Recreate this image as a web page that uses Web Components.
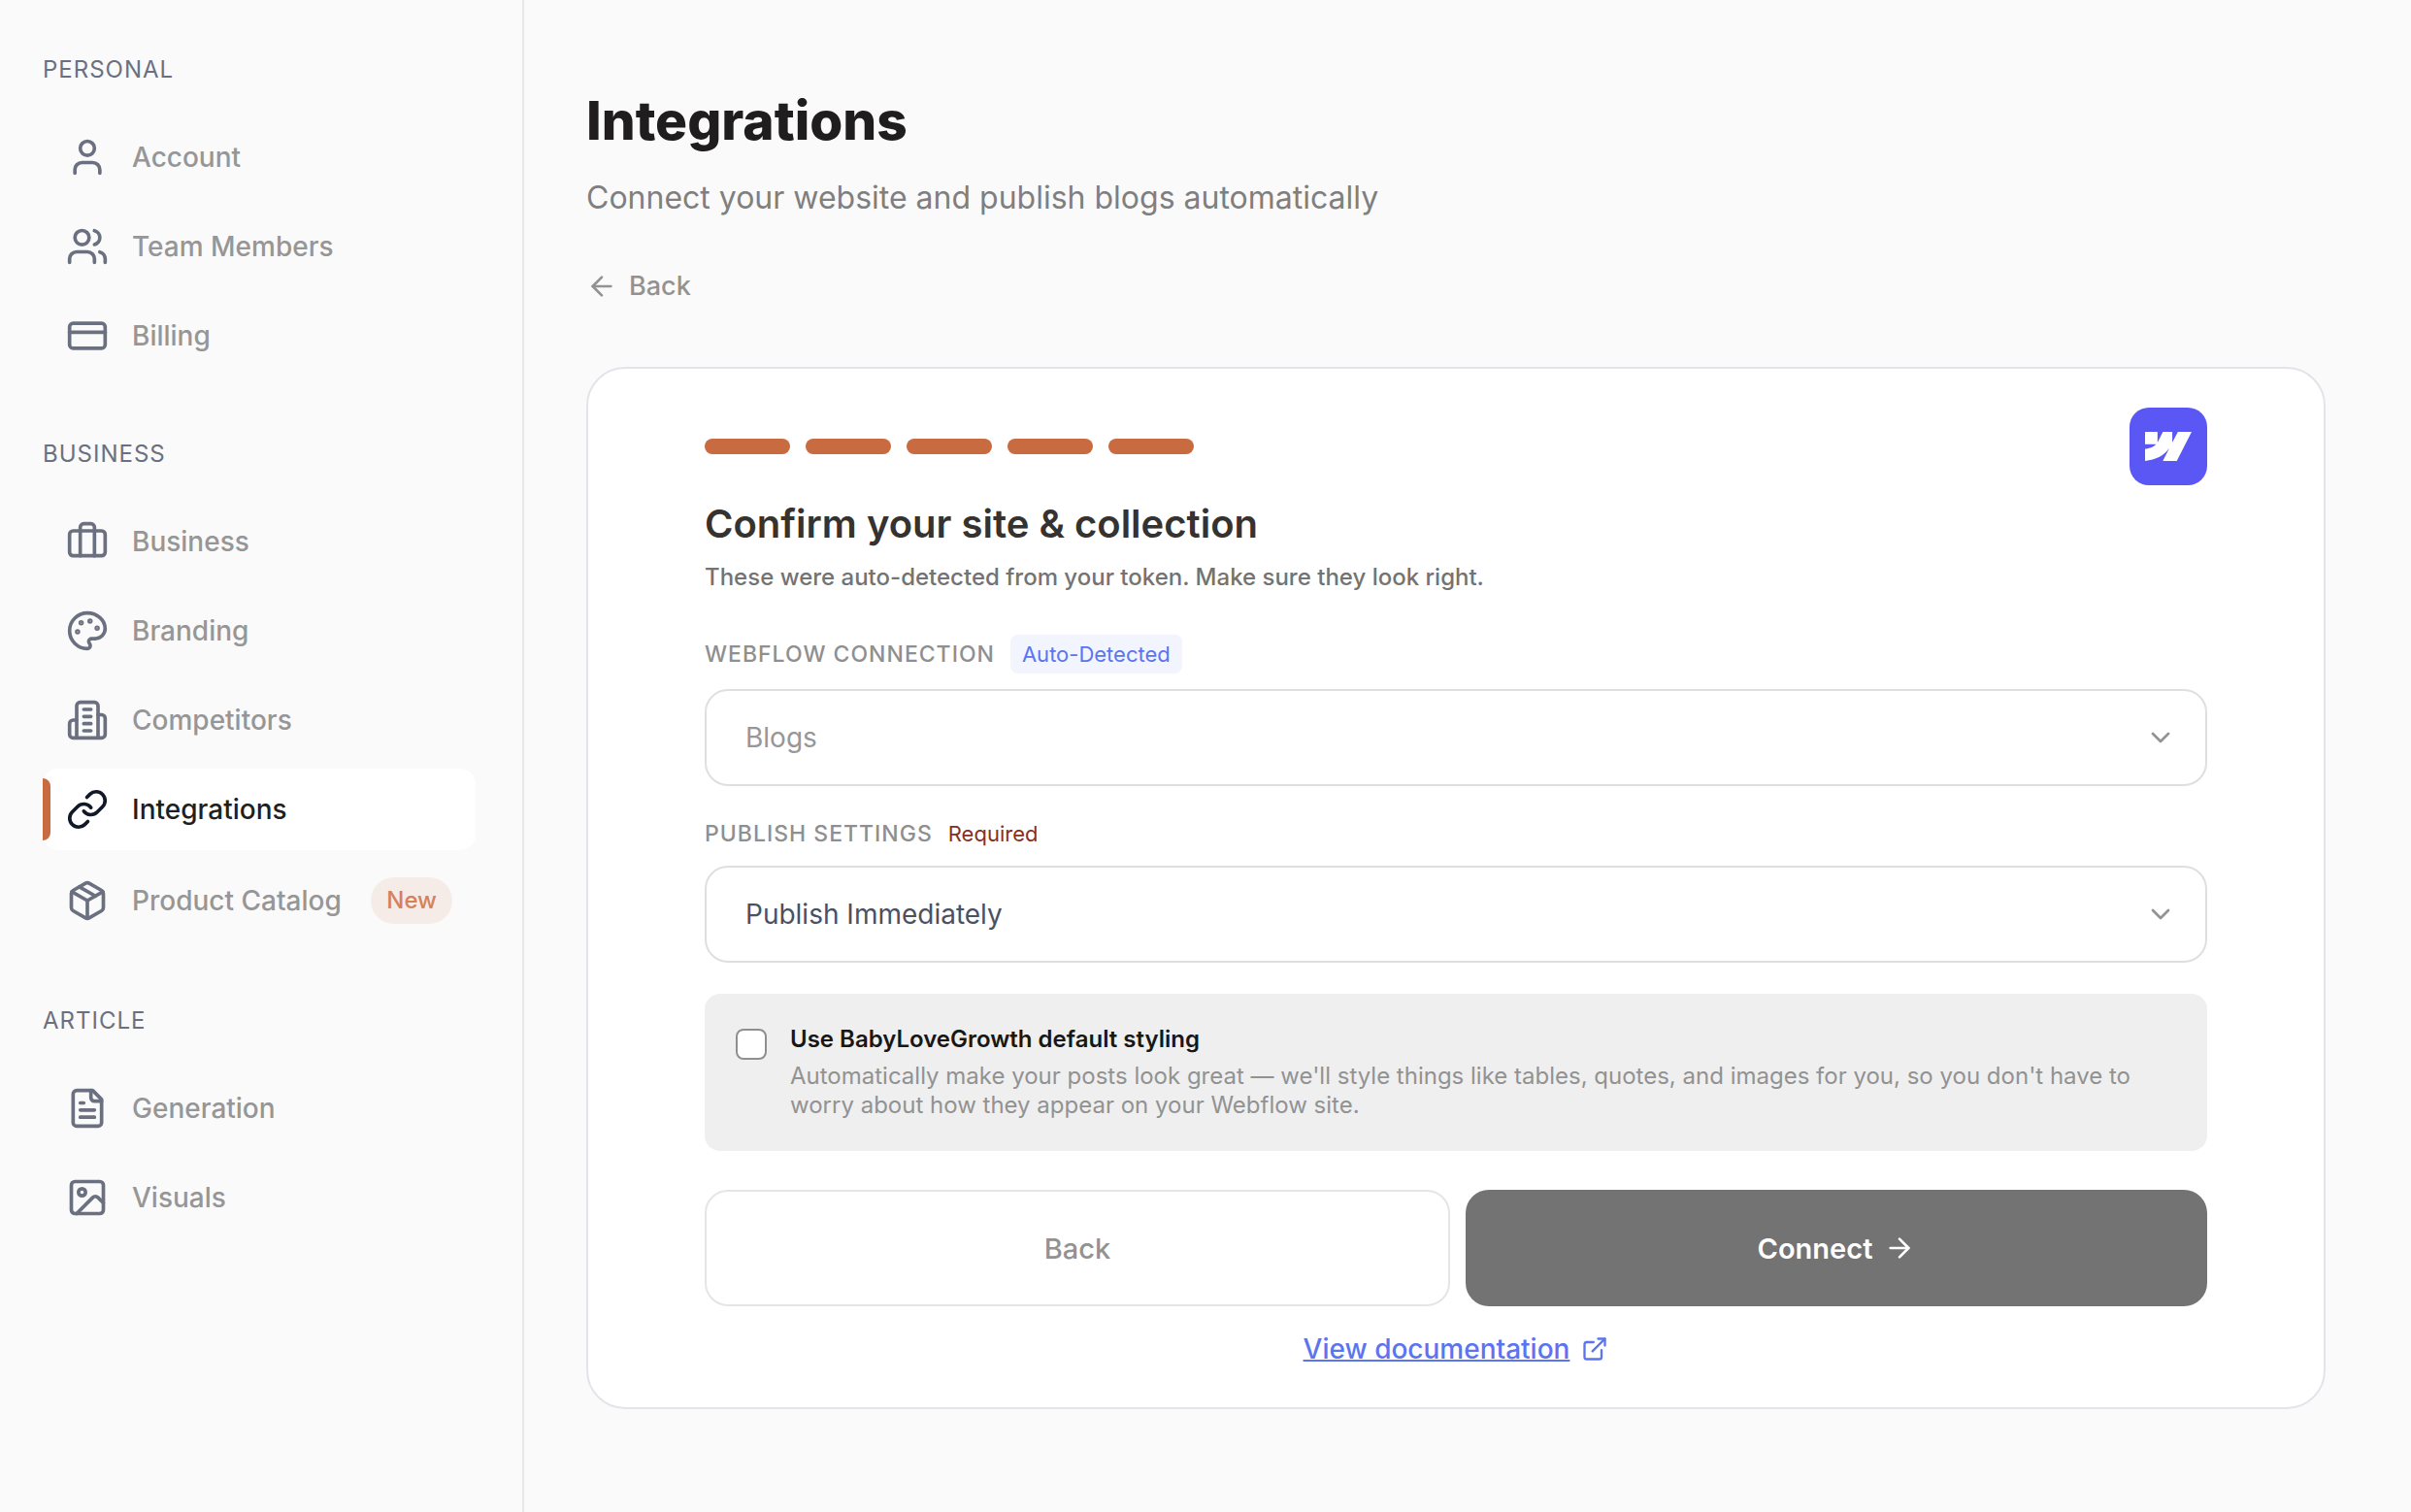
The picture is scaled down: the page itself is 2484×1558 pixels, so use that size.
<!DOCTYPE html>
<html lang="en">
<head>
<meta charset="UTF-8">
<meta name="viewport" content="width=device-width, initial-scale=1.0">
<title>Integrations</title>
<style>
  body {
    margin: 0;
    background: #fafafa;
    color: #1f1f1f;
    font-family: Inter, "Liberation Sans", sans-serif;
  }
</style>
</head>
<body>
<app-shell>
  <app-sidebar slot="sidebar">
    <nav-section heading="Personal">
      <nav-item icon="user">Account</nav-item>
      <nav-item icon="users">Team Members</nav-item>
      <nav-item icon="card">Billing</nav-item>
    </nav-section>
    <nav-section heading="Business">
      <nav-item icon="briefcase">Business</nav-item>
      <nav-item icon="palette">Branding</nav-item>
      <nav-item icon="building">Competitors</nav-item>
      <nav-item icon="link" active>Integrations</nav-item>
      <nav-item icon="package" badge="New">Product Catalog</nav-item>
    </nav-section>
    <nav-section heading="Article">
      <nav-item icon="file">Generation</nav-item>
      <nav-item icon="image">Visuals</nav-item>
    </nav-section>
  </app-sidebar>

  <page-header>
    Integrations
    <span slot="subtitle">Connect your website and publish blogs automatically</span>
  </page-header>

  <setup-card steps="5">
    <span slot="title">Confirm your site &amp; collection</span>
    <span slot="description">These were auto-detected from your token. Make sure they look right.</span>
    <select-field label="Webflow connection" tag="Auto-Detected" value="Blogs" muted></select-field>
    <select-field label="Publish settings" note="Required" value="Publish Immediately"></select-field>
    <check-option>
      Use BabyLoveGrowth default styling
      <span slot="hint">Automatically make your posts look great — we'll style things like tables, quotes, and images for you, so you don't have to worry about how they appear on your Webflow site.</span>
    </check-option>
    <form-actions></form-actions>
    <doc-link>View documentation</doc-link>
  </setup-card>
</app-shell>

<script>
const ICONS = {
  user: '<path d="M19 21v-2a4 4 0 0 0-4-4H9a4 4 0 0 0-4 4v2"/><circle cx="12" cy="7" r="4"/>',
  users: '<path d="M16 21v-2a4 4 0 0 0-4-4H6a4 4 0 0 0-4 4v2"/><circle cx="9" cy="7" r="4"/><path d="M22 21v-2a4 4 0 0 0-3-3.87"/><path d="M16 3.13a4 4 0 0 1 0 7.75"/>',
  card: '<rect x="2" y="5" width="20" height="14" rx="2"/><path d="M2 10h20"/>',
  briefcase: '<path d="M16 20V4a2 2 0 0 0-2-2h-4a2 2 0 0 0-2 2v16"/><rect x="2" y="6" width="20" height="14" rx="2"/>',
  palette: '<circle cx="13.5" cy="6.5" r=".5" fill="currentColor"/><circle cx="17.5" cy="10.5" r=".5" fill="currentColor"/><circle cx="8.5" cy="7.5" r=".5" fill="currentColor"/><circle cx="6.5" cy="12.5" r=".5" fill="currentColor"/><path d="M12 2C6.5 2 2 6.5 2 12s4.5 10 10 10c.926 0 1.648-.746 1.648-1.688 0-.437-.18-.835-.437-1.125-.29-.289-.438-.652-.438-1.125a1.64 1.64 0 0 1 1.668-1.668h1.996c3.051 0 5.555-2.503 5.555-5.554C21.965 6.012 17.461 2 12 2z"/>',
  building: '<path d="M6 22V4a2 2 0 0 1 2-2h8a2 2 0 0 1 2 2v18Z"/><path d="M6 12H4a2 2 0 0 0-2 2v6a2 2 0 0 0 2 2h2"/><path d="M18 9h2a2 2 0 0 1 2 2v9a2 2 0 0 1-2 2h-2"/><path d="M10 6h4M10 10h4M10 14h4M10 18h4"/>',
  link: '<path d="M10 13a5 5 0 0 0 7.54.54l3-3a5 5 0 0 0-7.07-7.07l-1.72 1.71"/><path d="M14 11a5 5 0 0 0-7.54-.54l-3 3a5 5 0 0 0 7.07 7.07l1.71-1.71"/>',
  package: '<path d="m7.5 4.27 9 5.15"/><path d="M21 8a2 2 0 0 0-1-1.73l-7-4a2 2 0 0 0-2 0l-7 4A2 2 0 0 0 3 8v8a2 2 0 0 0 1 1.73l7 4a2 2 0 0 0 2 0l7-4A2 2 0 0 0 21 16Z"/><path d="m3.3 7 8.7 5 8.7-5"/><path d="M12 22V12"/>',
  file: '<path d="M15 2H6a2 2 0 0 0-2 2v16a2 2 0 0 0 2 2h12a2 2 0 0 0 2-2V7Z"/><path d="M14 2v4a2 2 0 0 0 2 2h4"/><path d="M10 9H8M16 13H8M16 17H8"/>',
  image: '<rect x="3" y="3" width="18" height="18" rx="2"/><circle cx="9" cy="9" r="2"/><path d="m21 15-3.086-3.086a2 2 0 0 0-2.828 0L6 21"/>',
  'arrow-left': '<path d="m12 19-7-7 7-7"/><path d="M19 12H5"/>',
  'arrow-right': '<path d="M5 12h14"/><path d="m12 5 7 7-7 7"/>',
  chevron: '<path d="m6 9 6 6 6-6"/>',
  external: '<path d="M15 3h6v6"/><path d="M10 14 21 3"/><path d="M18 13v6a2 2 0 0 1-2 2H5a2 2 0 0 1-2-2V8a2 2 0 0 1 2-2h6"/>'
};

class UiIcon extends HTMLElement {
  connectedCallback() {
    const size = this.getAttribute('size') || 32;
    this.attachShadow({ mode: 'open' });
    this.shadowRoot.innerHTML = `
      <style>
        :host { display: block; flex: none; width: ${size}px; height: ${size}px; }
        svg { display: block; width: 100%; height: 100%; }
      </style>
      <svg viewBox="0 0 24 24" fill="none" stroke="currentColor" stroke-width="2"
        stroke-linecap="round" stroke-linejoin="round" aria-hidden="true">${ICONS[this.getAttribute('name')]}</svg>
    `;
  }
}
customElements.define('ui-icon', UiIcon);

class AppShell extends HTMLElement {
  connectedCallback() {
    this.attachShadow({ mode: 'open' });
    this.shadowRoot.innerHTML = `
      <style>
        :host { display: flex; min-height: 100vh; }
        main {
          flex: 1;
          min-width: 0;
          box-sizing: border-box;
          padding: 92px 88px 64px 64px;
        }
      </style>
      <slot name="sidebar"></slot>
      <main><slot></slot></main>
    `;
  }
}
customElements.define('app-shell', AppShell);

class AppSidebar extends HTMLElement {
  connectedCallback() {
    this.attachShadow({ mode: 'open' });
    this.shadowRoot.innerHTML = `
      <style>
        :host {
          display: block;
          flex: none;
          box-sizing: border-box;
          width: 540px;
          padding: 56px 48px 56px 44px;
          border-right: 2px solid #e5e7eb;
        }
        nav { display: flex; flex-direction: column; gap: 64px; }
      </style>
      <nav aria-label="Settings"><slot></slot></nav>
    `;
  }
}
customElements.define('app-sidebar', AppSidebar);

class NavSection extends HTMLElement {
  connectedCallback() {
    this.attachShadow({ mode: 'open' });
    this.shadowRoot.innerHTML = `
      <style>
        :host { display: block; }
        h2 {
          margin: 0 0 32px;
          color: #6b7080;
          font-size: 24px;
          font-weight: 400;
          line-height: 32px;
          letter-spacing: 1px;
        }
        .items { display: flex; flex-direction: column; gap: 8px; }
      </style>
      <h2>${this.getAttribute('heading').toUpperCase()}</h2>
      <div class="items"><slot></slot></div>
    `;
  }
}
customElements.define('nav-section', NavSection);

class NavItem extends HTMLElement {
  connectedCallback() {
    const badge = this.getAttribute('badge');
    this.attachShadow({ mode: 'open' });
    this.shadowRoot.innerHTML = `
      <style>
        :host { display: block; }
        a {
          position: relative;
          display: flex;
          align-items: center;
          gap: 24px;
          padding: 20px 24px;
          border-radius: 16px;
          color: #969696;
          font-size: 28px;
          font-weight: 500;
          line-height: 44px;
          text-decoration: none;
          white-space: nowrap;
        }
        ui-icon { color: #6b7080; }
        :host([active]) a { background: #fff; color: #1f1f1f; }
        :host([active]) ui-icon { color: #111827; }
        /* accent strip on the current page */
        :host([active]) a::before {
          content: "";
          position: absolute;
          left: 0;
          top: 10px;
          bottom: 10px;
          width: 8px;
          border-radius: 0 8px 8px 0;
          background: #c96b41;
        }
        .badge {
          margin-left: auto;
          padding: 0 16px;
          border-radius: 24px;
          background: #f5ebe7;
          color: #d4825c;
          font-size: 24px;
          line-height: 48px;
        }
      </style>
      <a href="#" ${this.hasAttribute('active') ? 'aria-current="page"' : ''}>
        <ui-icon name="${this.getAttribute('icon')}" size="44"></ui-icon>
        <span><slot></slot></span>
        ${badge ? `<span class="badge">${badge}</span>` : ''}
      </a>
    `;
  }
}
customElements.define('nav-item', NavItem);

class PageHeader extends HTMLElement {
  connectedCallback() {
    this.attachShadow({ mode: 'open' });
    this.shadowRoot.innerHTML = `
      <style>
        :host { display: block; margin-bottom: 64px; }
        h1 {
          margin: 0;
          color: #1f1d1e;
          font-size: 55px;
          font-weight: 800;
          line-height: 64px;
        }
        p {
          margin: 24px 0 48px;
          color: #7f7f7f;
          font-size: 32px;
          line-height: 48px;
        }
        button {
          display: flex;
          align-items: center;
          gap: 12px;
          padding: 0;
          border: 0;
          background: none;
          color: #929292;
          font: inherit;
          font-size: 27px;
          font-weight: 500;
          line-height: 38px;
          cursor: pointer;
        }
      </style>
      <h1><slot></slot></h1>
      <p><slot name="subtitle"></slot></p>
      <button type="button"><ui-icon name="arrow-left"></ui-icon>Back</button>
    `;
  }
}
customElements.define('page-header', PageHeader);

class SetupCard extends HTMLElement {
  connectedCallback() {
    const steps = Number(this.getAttribute('steps'));
    this.attachShadow({ mode: 'open' });
    this.shadowRoot.innerHTML = `
      <style>
        :host {
          display: block;
          padding: 40px 120px;
          border: 2px solid #e3e4ea;
          border-radius: 40px;
          background: #fff;
        }
        header { display: flex; align-items: center; justify-content: space-between; }
        .steps { display: flex; gap: 16px; }
        .steps i {
          width: 88px;
          height: 16px;
          border-radius: 8px;
          background: #c96b41;
        }
        .logo {
          display: grid;
          place-items: center;
          width: 80px;
          height: 80px;
          border-radius: 20px;
          background: #5b57f5;
        }
        h2 {
          margin: 16px 0;
          color: #35322f;
          font-size: 40px;
          font-weight: 600;
          line-height: 48px;
        }
        p {
          margin: 0 0 44px;
          color: #737373;
          font-size: 24px;
          font-weight: 500;
          line-height: 30px;
        }
      </style>
      <header>
        <div class="steps">${'<i></i>'.repeat(steps)}</div>
        <div class="logo">
          <svg width="48" height="48" viewBox="0 0 24 24" role="img" aria-label="Webflow">
            <path fill="#fff" d="m24 4.515-7.658 14.97H9.149l3.205-6.204h-.144C9.566 16.713 5.621 18.973 0 19.485v-6.118s3.596-.213 5.71-2.435H0V4.515h6.417v5.278l.144-.001 2.622-5.277h4.854v5.244h.144l2.72-5.244H24Z"/>
          </svg>
        </div>
      </header>
      <h2><slot name="title"></slot></h2>
      <p><slot name="description"></slot></p>
      <slot></slot>
    `;
  }
}
customElements.define('setup-card', SetupCard);

class SelectField extends HTMLElement {
  connectedCallback() {
    const tag = this.getAttribute('tag');
    const note = this.getAttribute('note');
    this.attachShadow({ mode: 'open' });
    this.shadowRoot.innerHTML = `
      <style>
        :host { display: block; margin-bottom: 32px; }
        .head {
          display: flex;
          align-items: center;
          gap: 16px;
          min-height: 34px;
          margin-bottom: 16px;
          font-size: 22px;
          line-height: 32px;
        }
        label {
          color: #8f8f8f;
          font-size: 23px;
          font-weight: 500;
          letter-spacing: 1px;
        }
        .tag {
          padding: 4px 12px;
          border-radius: 8px;
          background: #f2f4fe;
          color: #5b74f0;
        }
        .note { color: #8a2f20; }
        .box { display: grid; align-items: center; }
        .box > * { grid-area: 1 / 1; }
        ui-icon {
          justify-self: end;
          margin-right: 32px;
          color: #929292;
          pointer-events: none;
        }
        select {
          appearance: none;
          width: 100%;
          height: 100px;
          padding: 0 80px 0 40px;
          border: 2px solid #dfdfdf;
          border-radius: 24px;
          background: #fff;
          color: #4b5160;
          font: inherit;
          font-size: 28px;
        }
        :host([muted]) select { color: #979797; }
      </style>
      <div class="head">
        <label for="field">${this.getAttribute('label').toUpperCase()}</label>
        ${tag ? `<span class="tag">${tag}</span>` : ''}
        ${note ? `<span class="note">${note}</span>` : ''}
      </div>
      <div class="box">
        <select id="field"><option>${this.getAttribute('value')}</option></select>
        <ui-icon name="chevron"></ui-icon>
      </div>
    `;
  }
}
customElements.define('select-field', SelectField);

class CheckOption extends HTMLElement {
  connectedCallback() {
    this.attachShadow({ mode: 'open' });
    this.shadowRoot.innerHTML = `
      <style>
        :host {
          display: flex;
          gap: 24px;
          margin-bottom: 40px;
          padding: 32px;
          border-radius: 16px;
          background: #efefef;
          font-size: 24px;
          line-height: 30px;
        }
        input {
          appearance: none;
          flex: none;
          box-sizing: border-box;
          width: 32px;
          height: 32px;
          margin: 4px 0 0;
          border: 2px solid #8f8f8f;
          border-radius: 8px;
          background: #fff;
        }
        input:checked { background: #c96b41; border-color: #c96b41; }
        label { color: #171717; font-weight: 600; }
        p { margin: 8px 0 0; color: #929292; }
      </style>
      <input type="checkbox" id="option" aria-describedby="hint">
      <div>
        <label for="option"><slot></slot></label>
        <p id="hint"><slot name="hint"></slot></p>
      </div>
    `;
  }
}
customElements.define('check-option', CheckOption);

class FormActions extends HTMLElement {
  connectedCallback() {
    this.attachShadow({ mode: 'open' });
    this.shadowRoot.innerHTML = `
      <style>
        :host { display: flex; gap: 16px; margin-bottom: 24px; }
        button {
          flex: 1 1 0;
          display: flex;
          align-items: center;
          justify-content: center;
          gap: 12px;
          height: 120px;
          padding: 0;
          border: 0;
          border-radius: 24px;
          font: inherit;
          font-size: 29px;
          cursor: pointer;
        }
        .back {
          border: 2px solid #e5e5e5;
          background: #fff;
          color: #929292;
          font-weight: 500;
        }
        .connect { background: #737373; color: #fff; font-weight: 600; }
      </style>
      <button type="button" class="back">Back</button>
      <button type="submit" class="connect">Connect<ui-icon name="arrow-right"></ui-icon></button>
    `;
  }
}
customElements.define('form-actions', FormActions);

class DocLink extends HTMLElement {
  connectedCallback() {
    this.attachShadow({ mode: 'open' });
    this.shadowRoot.innerHTML = `
      <style>
        :host { display: flex; justify-content: center; }
        a {
          display: flex;
          align-items: center;
          gap: 12px;
          color: #5b74f0;
          font-size: 28px;
          font-weight: 500;
          line-height: 40px;
          text-decoration: none;
        }
        span {
          text-decoration: underline;
          text-decoration-thickness: 2px;
          text-decoration-skip-ink: none;
        }
      </style>
      <a href="#"><span><slot></slot></span><ui-icon name="external" size="28"></ui-icon></a>
    `;
  }
}
customElements.define('doc-link', DocLink);
</script>
</body>
</html>
